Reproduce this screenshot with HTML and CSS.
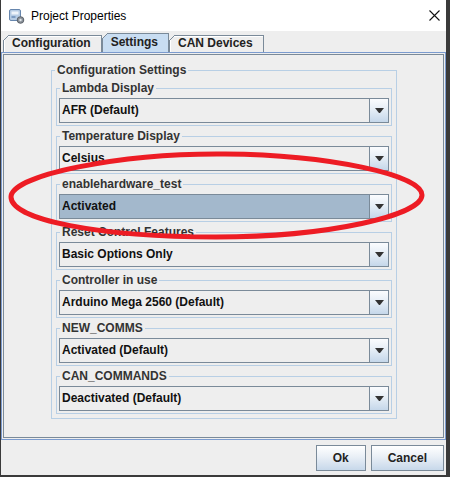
FILE: index.html
```html
<!DOCTYPE html>
<html>
<head>
<meta charset="utf-8">
<title>Project Properties</title>
<link rel="stylesheet" href="styles.css">
</head>
<body>
<div class="window">
  <div class="titlebar">
    <svg class="app-icon" width="17" height="16" viewBox="0 0 17 16">
      <rect x="1.5" y="1.5" width="11" height="11" rx="1.5" fill="#b6cce4" stroke="#6786ad"/>
      <rect x="3.5" y="3.5" width="7" height="3" fill="#eef4fa"/>
      <rect x="3.5" y="8" width="4" height="2" fill="#7d9cc2"/>
      <circle cx="12.5" cy="12" r="3.3" fill="#8c939b" stroke="#5b6169"/>
      <circle cx="12.5" cy="12" r="1.2" fill="#e2e6ea"/>
    </svg>
    <span class="title">Project Properties</span>
    <svg class="close" width="11" height="11" viewBox="0 0 11 11">
      <path d="M0.5 0.5 L10.5 10.5 M10.5 0.5 L0.5 10.5" stroke="#111" stroke-width="1.1" fill="none"/>
    </svg>
  </div>

  <div class="tabs">
    <div class="tab">Configuration</div>
    <div class="tab selected">Settings</div>
    <div class="tab">CAN Devices</div>
  </div>

  <div class="panel">
    <div class="scroll">
      <fieldset class="group outer">
        <legend>Configuration Settings</legend>

        <fieldset class="group inner">
          <legend>Lambda Display</legend>
          <div class="combo"><span class="value">AFR (Default)</span><span class="arrow"></span></div>
        </fieldset>

        <fieldset class="group inner">
          <legend>Temperature Display</legend>
          <div class="combo"><span class="value">Celsius</span><span class="arrow"></span></div>
        </fieldset>

        <fieldset class="group inner">
          <legend>enablehardware_test</legend>
          <div class="combo focused"><span class="value">Activated</span><span class="arrow"></span></div>
        </fieldset>

        <fieldset class="group inner">
          <legend>Reset Control Features</legend>
          <div class="combo"><span class="value">Basic Options Only</span><span class="arrow"></span></div>
        </fieldset>

        <fieldset class="group inner">
          <legend>Controller in use</legend>
          <div class="combo"><span class="value">Arduino Mega 2560 (Default)</span><span class="arrow"></span></div>
        </fieldset>

        <fieldset class="group inner">
          <legend>NEW_COMMS</legend>
          <div class="combo"><span class="value">Activated (Default)</span><span class="arrow"></span></div>
        </fieldset>

        <fieldset class="group inner">
          <legend>CAN_COMMANDS</legend>
          <div class="combo"><span class="value">Deactivated (Default)</span><span class="arrow"></span></div>
        </fieldset>
      </fieldset>
    </div>
  </div>

  <div class="buttons">
    <button class="btn">Ok</button>
    <button class="btn">Cancel</button>
  </div>

  <svg class="annotation" width="450" height="477" viewBox="0 0 450 477">
    <path d="M 11 197 C 11 175, 120 153, 225 154 C 330 155, 422 175, 422 195 C 422 215, 330 237, 216 237 C 100 237, 11 220, 11 197 Z" fill="none" stroke="#ed1c24" stroke-width="5"/>
  </svg>
</div>
</body>
</html>
```

FILE: styles.css
```css
* {
  box-sizing: border-box;
}

html, body {
  margin: 0;
  padding: 0;
}

body {
  width: 450px;
  height: 477px;
  overflow: hidden;
  background: #eeeeee;
  font-family: "Liberation Sans", Arial, sans-serif;
}

.window {
  position: relative;
  width: 450px;
  height: 477px;
  display: flex;
  flex-direction: column;
  background: #eeeeee;
  border-left: 1px solid #3a3a3a;
  border-right: 4px solid #3a3a3a;
  border-bottom: 2px solid #3a3a3a;
}

/* Title bar */
.titlebar {
  flex: none;
  height: 31px;
  background: #ffffff;
  display: flex;
  align-items: center;
  padding-left: 7px;
}

.app-icon {
  flex: none;
  margin-right: 6px;
}

.title {
  font-size: 12px;
  color: #000;
}

.close {
  margin-left: auto;
  margin-right: 6px;
}

/* Tabs */
.tabs {
  flex: none;
  height: 21px;
  display: flex;
  align-items: flex-end;
  padding-left: 2px;
}

.tab {
  position: relative;
  height: 17px;
  border: 1px solid #7a8a99;
  border-bottom: none;
  padding: 0 10px 0 8px;
  font-weight: bold;
  font-size: 12px;
  line-height: 14px;
  color: #222;
  background: #eeeeee;
  box-shadow: inset 1px 1px 0 #ffffff;
}

.tab::before {
  content: "";
  position: absolute;
  top: -1px;
  left: -1px;
  width: 6px;
  height: 6px;
  background: linear-gradient(to bottom right, #eeeeee 0 calc(50% - 0.7px), #7a8a99 calc(50% - 0.7px) calc(50% + 0.7px), transparent calc(50% + 0.7px));
}

.tab.selected {
  height: 19px;
  padding-top: 1px;
  background: #c8ddf2;
  box-shadow: none;
}

/* Tab content */
.panel {
  flex: none;
  height: 388px;
  border: 1px solid #7b9bcf;
  padding: 1px;
}

.scroll {
  height: 100%;
  border: 1px solid #7a8a99;
  padding-top: 8px;
}

.group {
  margin: 0;
  border: 1px solid #b8cfe5;
  min-width: 0;
}

.group > legend {
  padding: 0 2px;
  font-weight: bold;
  font-size: 12px;
  line-height: 15px;
  color: #333;
}

.group.outer {
  width: 346px;
  margin-left: 47px;
  padding: 3px 4px 4px;
}

.outer > legend {
  margin-left: -1px;
}

.group.inner {
  padding: 2px;
}

.inner > legend {
  margin-left: 1px;
}

.group.inner + .group.inner {
  margin-top: 3px;
}

/* Combo box */
.combo {
  display: flex;
  height: 25px;
  border: 1px solid #7a8a99;
  background: #eeeeee;
}

.value {
  flex: 1;
  padding-left: 2px;
  font-weight: bold;
  font-size: 12px;
  line-height: 23px;
  color: #111;
  white-space: nowrap;
  overflow: hidden;
}

.combo.focused .value {
  background: #a3b8cc;
}

.arrow {
  flex: none;
  width: 19px;
  border-left: 1px solid #7a8a99;
  background: linear-gradient(#fbfcfe 0%, #e6eef6 45%, #c5d7ea 100%);
  display: flex;
  align-items: center;
  justify-content: center;
}

.arrow::before {
  content: "";
  width: 1px;
  height: 0;
  border-top: 5px solid #333;
  border-left: 4px solid transparent;
  border-right: 4px solid transparent;
  box-sizing: content-box;
}

/* Buttons */
.buttons {
  flex: 1;
  display: flex;
  justify-content: flex-end;
  align-items: flex-start;
  gap: 5px;
  padding: 5px 2px 0 0;
}

.btn {
  height: 26px;
  margin: 0;
  padding: 0 16px;
  border: 1px solid #7a8a99;
  border-radius: 0;
  background: linear-gradient(#ffffff 0%, #e9eff6 45%, #c7d8ea 100%);
  font-family: "Liberation Sans", Arial, sans-serif;
  font-weight: bold;
  font-size: 12px;
  color: #222;
}

/* Hand-drawn annotation */
.annotation {
  position: absolute;
  top: 0;
  left: -1px;
  pointer-events: none;
}
```
